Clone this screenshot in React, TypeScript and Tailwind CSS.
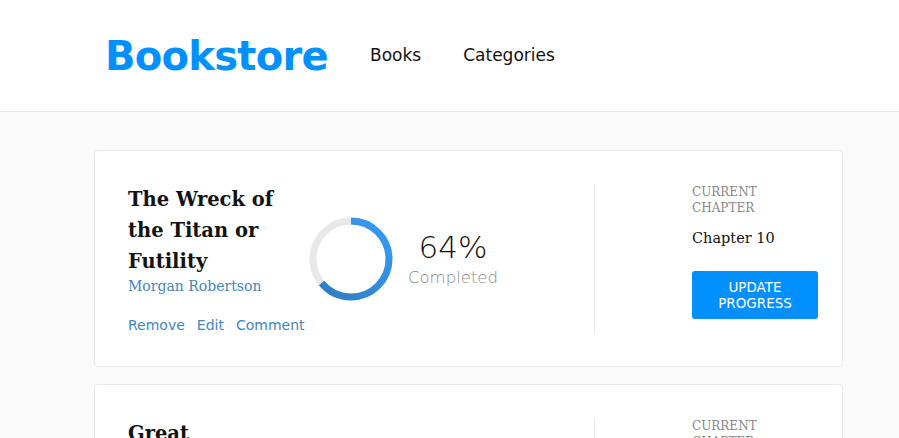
import React from 'react';

type Book = {
  title: string;
  author: string;
  progress: number;
  chapter: string;
};

const books: Book[] = [
  { title: 'The Wreck of the Titan or Futility', author: 'Morgan Robertson', progress: 64, chapter: 'Chapter 10' },
  { title: 'Great Expectations', author: 'Charles Dickens', progress: 8, chapter: 'Chapter 3' },
];

const sans = "font-['DejaVu_Sans',sans-serif]";
const slab = "font-['DejaVu_Serif',serif]";

const ProgressRing: React.FC<{ value: number }> = ({ value }) => {
  const r = 38;
  const c = 2 * Math.PI * r;
  return (
    <svg width="86" height="86" viewBox="0 0 86 86" className="-rotate-90">
      <defs>
        <linearGradient id="ring" x1="0" y1="0" x2="1" y2="1">
          <stop offset="0%" stopColor="#307bbe" />
          <stop offset="100%" stopColor="#379cf6" />
        </linearGradient>
      </defs>
      <circle cx="43" cy="43" r={r} fill="none" stroke="#e8e8e8" strokeWidth="7" />
      <circle
        cx="43"
        cy="43"
        r={r}
        fill="none"
        stroke="url(#ring)"
        strokeWidth="7"
        strokeDasharray={c}
        style={{ strokeDashoffset: c * (1 - value / 100) }}
      />
    </svg>
  );
};

const BookCard: React.FC<{ book: Book }> = ({ book }) => (
  <div className="bg-white border border-[#e8e8e8] rounded-[4px] pl-[33px] pr-6 pt-[33px] pb-[32px] flex items-center">
    <div className="w-[165px] self-start">
      <h2 className={`${slab} text-[19.5px] font-bold leading-[31px] text-[#121212]`}>{book.title}</h2>
      <p className={`${slab} text-[14px] text-[#4386bf] leading-[18px]`}>{book.author}</p>
      <div className={`${sans} mt-[21px] flex gap-[12px] text-[14px] leading-[18px] text-[#4386bf]`}>
        <button>Remove</button>
        <button>Edit</button>
        <button>Comment</button>
      </div>
    </div>
    <div className="ml-[15px] w-[288px] flex items-center self-center">
      <ProgressRing value={book.progress} />
      <div className="ml-[14px] flex flex-col items-center">
        <span className={`${sans} text-[31px] font-extralight leading-[34px] text-[#121212]`}>{book.progress}%</span>
        <span className={`${sans} text-[16.5px] font-light text-[#888] leading-[22px] mt-[3px]`}>Completed</span>
      </div>
    </div>
    <div className="self-stretch w-px bg-[#e8e8e8]"></div>
    <div className="ml-[97px] self-start flex flex-col">
      <span className={`${slab} text-[12px] font-light text-[#888] leading-[16px] w-[80px] uppercase`}>Current Chapter</span>
      <span className={`${slab} text-[14.5px] text-[#121212] mt-[12px] leading-[20px]`}>{book.chapter}</span>
      <button className={`${sans} mt-[23px] w-[126px] h-[48px] rounded-[3px] bg-[#0290ff] text-white text-[13.5px] leading-[16px]`}>
        UPDATE
        <br />
        PROGRESS
      </button>
    </div>
  </div>
);

export default function App() {
  return (
    <div className="min-h-screen bg-[#fafafa]">
      <header className="bg-white border-b border-[#e8e8e8] h-[112px] flex items-center pl-[105px]">
        <h1 className={`${sans} text-[40px] font-bold text-[#0290ff] tracking-[-0.7px]`}>Bookstore</h1>
        <nav className={`${sans} flex gap-[42px] ml-[42px] text-[17px] text-[#121212]`}>
          <a href="#">Books</a>
          <a href="#">Categories</a>
        </nav>
      </header>
      <main className="w-[749px] ml-[94px] pt-[38px] flex flex-col gap-[17px]">
        {books.map((b) => (
          <BookCard key={b.title} book={b} />
        ))}
      </main>
    </div>
  );
}
